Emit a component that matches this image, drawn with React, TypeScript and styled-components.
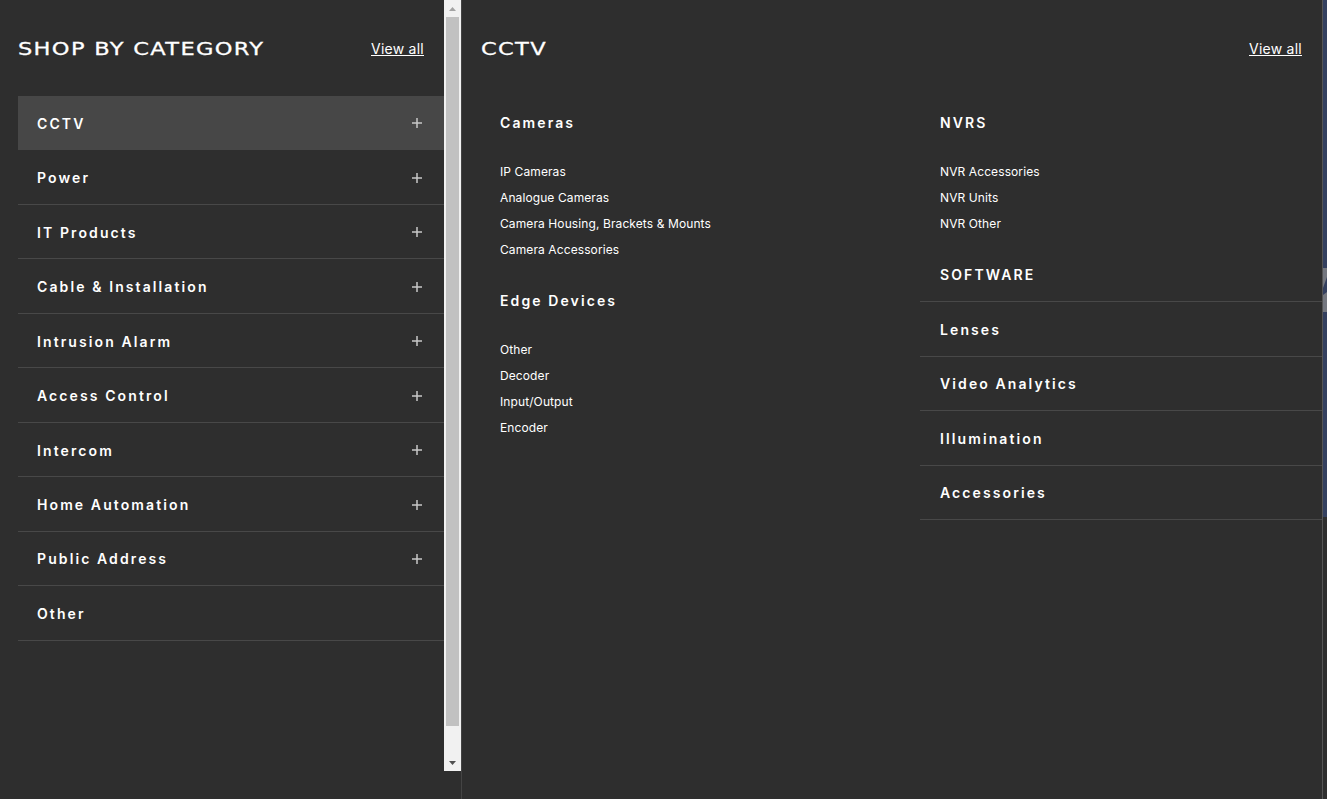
import { createGlobalStyle } from "styled-components";
import styled from "styled-components";

const categories = [
  { name: "CCTV", plus: true, active: true },
  { name: "Power", plus: true },
  { name: "IT Products", plus: true },
  { name: "Cable & Installation", plus: true },
  { name: "Intrusion Alarm", plus: true },
  { name: "Access Control", plus: true },
  { name: "Intercom", plus: true },
  { name: "Home Automation", plus: true },
  { name: "Public Address", plus: true },
  { name: "Other", plus: false },
];

const groups = [
  {
    title: "Cameras",
    links: ["IP Cameras", "Analogue Cameras", "Camera Housing, Brackets & Mounts", "Camera Accessories"],
  },
  {
    title: "Edge Devices",
    links: ["Other", "Decoder", "Input/Output", "Encoder"],
  },
];

const nvrLinks = ["NVR Accessories", "NVR Units", "NVR Other"];
const plainRows = ["SOFTWARE", "Lenses", "Video Analytics", "Illumination", "Accessories"];

const App = () => {
  return (
    <SPage>
      <GlobalStyle />
      <SLeft>
        <SLeftContent>
          <SHead>
            <STitle>SHOP BY CATEGORY</STitle>
            <SViewAll href="#">View all</SViewAll>
          </SHead>
          <SCatList>
            {categories.map((c) => (
              <SCatRow key={c.name} $active={c.active}>
                <SRowLabel>{c.name}</SRowLabel>
                {c.plus && (
                  <SPlus viewBox="0 0 10 10">
                    <path d="M5 0V10M0 5H10" stroke="#c8c8c8" strokeWidth="1.5" />
                  </SPlus>
                )}
              </SCatRow>
            ))}
          </SCatList>
        </SLeftContent>
        <SScrollbar>
          <SArrow viewBox="0 0 7 4">
            <path d="M3.5 0L7 4H0Z" fill="#a3a3a3" />
          </SArrow>
          <SThumb />
          <SArrow viewBox="0 0 7 4">
            <path d="M0 0H7L3.5 4Z" fill="#505050" />
          </SArrow>
        </SScrollbar>
      </SLeft>
      <SRight>
        <SRightHead>
          <STitle>CCTV</STitle>
          <SViewAll href="#">View all</SViewAll>
        </SRightHead>
        <SColumns>
          <SColumn>
            {groups.map((g) => (
              <SGroup key={g.title} $indent={38}>
                <SGroupTitle>{g.title}</SGroupTitle>
                <SLinks>
                  {g.links.map((l) => (
                    <SLink key={l}>{l}</SLink>
                  ))}
                </SLinks>
              </SGroup>
            ))}
          </SColumn>
          <SColumn>
            <SGroup $indent={20}>
              <SGroupTitle>NVRS</SGroupTitle>
              <SLinks>
                {nvrLinks.map((l) => (
                  <SLink key={l}>{l}</SLink>
                ))}
              </SLinks>
            </SGroup>
            <SPlainList>
              {plainRows.map((r) => (
                <SPlainRow key={r}>
                  <SRowLabel>{r}</SRowLabel>
                </SPlainRow>
              ))}
            </SPlainList>
          </SColumn>
        </SColumns>
      </SRight>
      <SEdge>
        <SEdgeMark viewBox="0 0 4 44" preserveAspectRatio="none">
          <path d="M0 0L4 0V9L0 20ZM0 27L4 24V44H0Z" fill="#74777f" />
        </SEdgeMark>
      </SEdge>
    </SPage>
  );
};

export default App;

const GlobalStyle = createGlobalStyle`
  html, body {
    margin: 0;
    padding: 0;
    background: #2e2e2e;
  }
`;

const SPage = styled.div`
  display: flex;
  width: 1327px;
  height: 799px;
  overflow: hidden;
  background: #2e2e2e;
  color: #ffffff;
  font-family: "Inter", "Noto Sans", sans-serif;
`;

const SLeft = styled.div`
  display: flex;
  align-items: flex-start;
  width: 461px;
  height: 100%;
  flex-shrink: 0;
`;

const SLeftContent = styled.div`
  width: 426px;
  padding-left: 18px;
`;

const SHead = styled.div`
  display: flex;
  align-items: center;
  justify-content: space-between;
  height: 96px;
  padding-right: 20px;
`;

const STitle = styled.div`
  margin-top: 2px;
  font-family: "DejaVu Sans", sans-serif;
  font-size: 18px;
  line-height: 20px;
  letter-spacing: 1.06px;
  color: #ffffff;
  -webkit-text-stroke: 0.3px #ffffff;
  transform: scaleX(1.25);
  transform-origin: left center;
`;

const SViewAll = styled.a`
  font-family: "Inter", sans-serif;
  font-size: 14px;
  letter-spacing: 0.25px;
  color: #ffffff;
  text-decoration: underline;
`;

const SCatList = styled.div`
  display: flex;
  flex-direction: column;
`;

const SCatRow = styled.div<{ $active?: boolean }>`
  display: flex;
  align-items: center;
  justify-content: space-between;
  box-sizing: border-box;
  height: 54.47px;
  padding: 1px 22px 0 19px;
  background: ${(p) => (p.$active ? "#474747" : "transparent")};
  border-bottom: 1px solid ${(p) => (p.$active ? "transparent" : "#484848")};
`;

const SRowLabel = styled.span`
  font-size: 14px;
  font-weight: 600;
  letter-spacing: 2.1px;
  color: #ffffff;
`;

const SPlus = styled.svg`
  width: 10px;
  height: 10px;
`;

const SScrollbar = styled.div`
  display: flex;
  flex-direction: column;
  align-items: center;
  box-sizing: border-box;
  width: 17px;
  height: 771px;
  background: #f1f1f1;
  padding: 7px 0 6px;
`;

const SArrow = styled.svg`
  width: 7px;
  height: 4px;
  flex-shrink: 0;
`;

const SThumb = styled.div`
  width: 13px;
  flex: 1;
  margin: 6px 0 35px;
  background: #c1c1c1;
`;

const SRight = styled.div`
  flex: 1;
  min-width: 0;
  border-left: 1px solid #444444;
  border-right: 1px solid #555555;
`;

const SRightHead = styled.div`
  display: flex;
  align-items: center;
  justify-content: space-between;
  height: 96px;
  padding: 0 20px 0 19px;
`;

const SColumns = styled.div`
  display: grid;
  grid-template-columns: 458px 1fr;
`;

const SColumn = styled.div`
  display: flex;
  flex-direction: column;
`;

const SGroup = styled.div<{ $indent: number }>`
  padding-left: ${(p) => p.$indent}px;
`;

const SGroupTitle = styled(SRowLabel).attrs({ as: "div" })`
  line-height: 54px;
`;

const SLinks = styled.div`
  display: flex;
  flex-direction: column;
  padding: 9px 0 11px;
`;

const SLink = styled.div`
  font-size: 12px;
  letter-spacing: 0.1px;
  line-height: 26px;
  color: #ffffff;
`;

const SPlainList = styled.div`
  display: flex;
  flex-direction: column;
`;

const SPlainRow = styled.div`
  display: flex;
  align-items: center;
  box-sizing: border-box;
  height: 54.45px;
  padding-left: 20px;
  border-bottom: 1px solid #484848;
`;

const SEdge = styled.div`
  width: 4px;
  height: 517px;
  flex-shrink: 0;
  background: #34405f;
  padding-top: 268px;
  box-sizing: border-box;
`;

const SEdgeMark = styled.svg`
  display: block;
  width: 4px;
  height: 44px;
`;
